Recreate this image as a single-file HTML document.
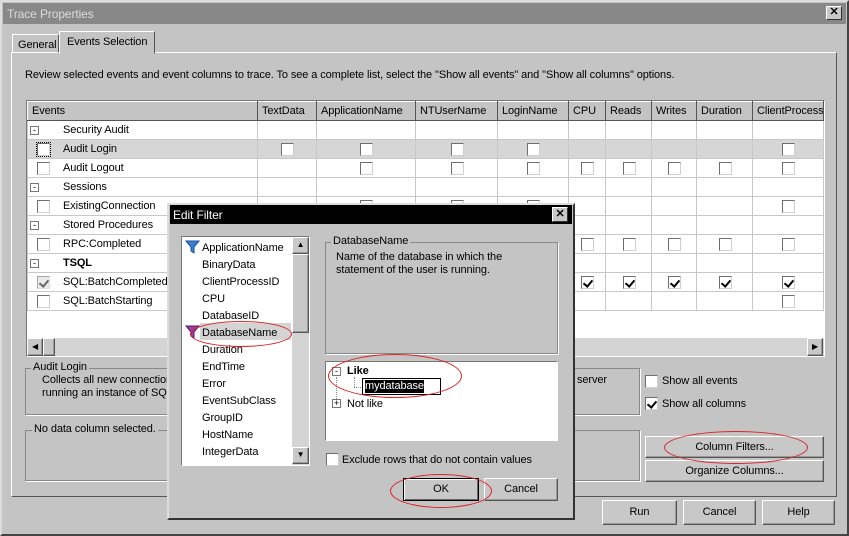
<!DOCTYPE html>
<html><head><meta charset="utf-8"><style>
*{box-sizing:border-box;margin:0;padding:0}
body{width:849px;height:536px;background:#c4c4c4;font-family:"Liberation Sans",sans-serif;font-size:11px;color:#000;position:relative;overflow:hidden;white-space:nowrap;letter-spacing:-0.1px}
.a{position:absolute}
.cb{position:absolute;width:13px;height:13px;background:#fff;border:1px solid #6e6e6e;border-right-color:#d0d0d0;border-bottom-color:#d0d0d0}
.ck::after{content:"";position:absolute;left:3px;top:1px;width:4px;height:7px;border:solid #000;border-width:0 2px 2px 0;transform:rotate(40deg)}
.btn{position:absolute;background:#c8c8c8;border:1px solid;border-color:#fff #555 #555 #fff;box-shadow:inset -1px -1px 0 #999;text-align:center;font-size:11px}
.grp{position:absolute;border:1px solid #888;box-shadow:1px 1px 0 #fff}
.lbl{position:absolute;background:#c4c4c4;padding:0 2px;font-size:11px}
table{border-collapse:collapse;table-layout:fixed}
td{border:1px solid #c8c8c8;height:19px;padding:0;position:relative;font-size:11px;overflow:hidden}
th{height:19px;font-weight:normal;text-align:left;padding-left:4px;background:#c4c4c4;border:1px solid;border-color:#fff #555 #555 #fff;font-size:11px;overflow:hidden}
.tc .cb{left:50%;margin-left:-6px;top:3px}
.ell{position:absolute;border:1px solid #d22;border-radius:50%}
.li{position:absolute;left:202px;font-size:11px}
.pm{position:absolute;left:2px;top:5px;width:9px;height:9px;border:1px solid #777;font-size:9px;line-height:6px;text-align:center}
</style></head><body>
<div class="a" style="left:0;top:0;width:849px;height:536px;border:2px solid;border-color:#ddd #444 #444 #ddd"></div>
<div class="a" style="left:3px;top:3px;width:843px;height:21px;background:#888"></div>
<div class="a" style="left:7px;top:7px;color:#ddd;font-size:12px">Trace Properties</div>
<div class="a" style="left:826px;top:6px;width:16px;height:14px;background:#c8c8c8;border:1px solid;border-color:#fff #333 #333 #fff;font-weight:bold;font-size:11px;line-height:11px;text-align:center">✕</div>

<div class="a" style="left:11px;top:52px;width:826px;height:445px;border:1px solid;border-color:#fff #555 #555 #fff"></div>
<div class="a" style="left:12px;top:34px;width:47px;height:19px;border:1px solid;border-color:#fff #555 transparent #fff;padding:4px 0 0 5px">General</div>
<div class="a" style="left:59px;top:31px;width:96px;height:23px;border:1px solid;border-color:#fff #555 transparent #fff;background:#c4c4c4;padding:4px 0 0 7px">Events Selection</div>
<div class="a" style="left:25px;top:69px">Review selected events and event columns to trace. To see a complete list, select the "Show all events" and "Show all columns" options.</div>

<div class="a" style="left:26px;top:100px;width:799px;height:257px;background:#fff;border:1px solid;border-color:#777 #fff #fff #777"></div>
<table class="a" style="left:27px;top:101px;width:796px">
<colgroup><col style="width:230px"><col style="width:59px"><col style="width:99px"><col style="width:82px"><col style="width:71px"><col style="width:37px"><col style="width:46px"><col style="width:45px"><col style="width:56px"><col style="width:71px"></colgroup>
<tr><th>Events</th><th>TextData</th><th>ApplicationName</th><th>NTUserName</th><th>LoginName</th><th>CPU</th><th>Reads</th><th>Writes</th><th>Duration</th><th>ClientProcess</th></tr>
<tr class="tc"><td><span class="pm">-</span><span class="a" style="left:35px;top:3px">Security Audit</span></td><td></td><td></td><td></td><td></td><td></td><td></td><td></td><td></td><td></td></tr>
<tr class="tc" style="background:#d6d6d6"><td><span class="cb" style="left:15px;top:3px;outline:1px dotted #000"></span><span class="a" style="left:35px;top:3px">Audit Login</span></td><td><span class="cb"></span></td><td><span class="cb"></span></td><td><span class="cb"></span></td><td><span class="cb"></span></td><td></td><td></td><td></td><td></td><td><span class="cb"></span></td></tr>
<tr class="tc"><td><span class="cb" style="left:15px;top:3px"></span><span class="a" style="left:35px;top:3px">Audit Logout</span></td><td></td><td><span class="cb"></span></td><td><span class="cb"></span></td><td><span class="cb"></span></td><td><span class="cb"></span></td><td><span class="cb"></span></td><td><span class="cb"></span></td><td><span class="cb"></span></td><td><span class="cb"></span></td></tr>
<tr class="tc"><td><span class="pm">-</span><span class="a" style="left:35px;top:3px">Sessions</span></td><td></td><td></td><td></td><td></td><td></td><td></td><td></td><td></td><td></td></tr>
<tr class="tc"><td><span class="cb" style="left:15px;top:3px"></span><span class="a" style="left:35px;top:3px">ExistingConnection</span></td><td></td><td><span class="cb"></span></td><td><span class="cb"></span></td><td><span class="cb"></span></td><td></td><td></td><td></td><td></td><td><span class="cb"></span></td></tr>
<tr class="tc"><td><span class="pm">-</span><span class="a" style="left:35px;top:3px">Stored Procedures</span></td><td></td><td></td><td></td><td></td><td></td><td></td><td></td><td></td><td></td></tr>
<tr class="tc"><td><span class="cb" style="left:15px;top:3px"></span><span class="a" style="left:35px;top:3px">RPC:Completed</span></td><td></td><td></td><td></td><td></td><td><span class="cb"></span></td><td><span class="cb"></span></td><td><span class="cb"></span></td><td><span class="cb"></span></td><td><span class="cb"></span></td></tr>
<tr class="tc"><td><span class="pm">-</span><span class="a" style="left:35px;top:3px;font-weight:bold">TSQL</span></td><td></td><td></td><td></td><td></td><td></td><td></td><td></td><td></td><td></td></tr>
<tr class="tc"><td><span class="cb ck" style="left:15px;top:3px;background:#ddd;opacity:.6"></span><span class="a" style="left:35px;top:3px">SQL:BatchCompleted</span></td><td></td><td></td><td></td><td></td><td><span class="cb ck"></span></td><td><span class="cb ck"></span></td><td><span class="cb ck"></span></td><td><span class="cb ck"></span></td><td><span class="cb ck"></span></td></tr>
<tr class="tc"><td><span class="cb" style="left:15px;top:3px"></span><span class="a" style="left:35px;top:3px">SQL:BatchStarting</span></td><td></td><td></td><td></td><td></td><td></td><td></td><td></td><td></td><td><span class="cb"></span></td></tr>
</table>
<div class="a" style="left:27px;top:338px;width:797px;height:18px;background:#d4d4d4"></div>
<div class="btn" style="left:27px;top:338px;width:16px;height:18px;font-size:8px;line-height:15px">◀</div>
<div class="btn" style="left:43px;top:338px;width:12px;height:18px"></div>
<div class="btn" style="left:807px;top:338px;width:16px;height:18px;font-size:8px;line-height:15px">▶</div>

<div class="grp" style="left:25px;top:368px;width:615px;height:47px"></div>
<div class="lbl" style="left:31px;top:361px">Audit Login</div>
<div class="a" style="left:42px;top:374px;line-height:13px">Collects all new connection<br>running an instance of SQ</div>
<div class="a" style="left:568px;top:374px">a server</div>
<div class="grp" style="left:25px;top:430px;width:615px;height:51px"></div>
<div class="lbl" style="left:32px;top:423px">No data column selected.</div>

<div class="cb" style="left:645px;top:375px"></div><div class="a" style="left:662px;top:375px">Show all events</div>
<div class="cb ck" style="left:645px;top:397px"></div><div class="a" style="left:662px;top:398px">Show all columns</div>
<div class="btn" style="left:645px;top:436px;width:179px;height:22px;line-height:20px">Column Filters...</div>
<div class="btn" style="left:645px;top:460px;width:179px;height:22px;line-height:20px">Organize Columns...</div>
<div class="ell" style="left:664px;top:431px;width:144px;height:33px"></div>

<div class="btn" style="left:602px;top:500px;width:75px;height:25px;line-height:23px">Run</div>
<div class="btn" style="left:683px;top:500px;width:73px;height:25px;line-height:23px">Cancel</div>
<div class="btn" style="left:762px;top:500px;width:73px;height:25px;line-height:23px">Help</div>

<!-- Edit Filter dialog -->
<div class="a" style="left:167px;top:203px;width:408px;height:317px;background:#c4c4c4;border:2px solid;border-color:#ddd #333 #333 #ddd"></div>
<div class="a" style="left:170px;top:205px;width:402px;height:19px;background:#000"></div>
<div class="a" style="left:173px;top:208px;color:#fff;font-size:12px">Edit Filter</div>
<div class="a" style="left:552px;top:207px;width:16px;height:15px;background:#c8c8c8;border:1px solid;border-color:#fff #333 #333 #fff;font-weight:bold;font-size:11px;line-height:12px;text-align:center">✕</div>

<div class="a" style="left:181px;top:236px;width:129px;height:230px;background:#fff;border:1px solid;border-color:#777 #fff #fff #777"></div>
<div class="a" style="left:292px;top:237px;width:17px;height:228px;background:#d4d4d4"></div>
<div class="btn" style="left:292px;top:237px;width:17px;height:17px;font-size:8px;line-height:14px">▲</div>
<div class="btn" style="left:292px;top:254px;width:17px;height:79px"></div>
<div class="btn" style="left:292px;top:447px;width:17px;height:17px;font-size:8px;line-height:14px">▼</div>
<div class="a" style="left:200px;top:323px;width:91px;height:17px;background:#d4d4d4"></div>
<svg class="a" style="left:185px;top:240px" width="16" height="14"><path d="M1 1H14L9 7V13L6 11V7Z" fill="#3a7fd0" stroke="#1a4f9a"/></svg>
<svg class="a" style="left:185px;top:325px" width="16" height="14"><path d="M1 1H14L9 7V13L6 11V7Z" fill="#9b3fa0" stroke="#5a1a6a"/></svg>
<div class="li" style="top:242px">ApplicationName</div>
<div class="li" style="top:259px">BinaryData</div>
<div class="li" style="top:276px">ClientProcessID</div>
<div class="li" style="top:293px">CPU</div>
<div class="li" style="top:310px">DatabaseID</div>
<div class="li" style="top:327px">DatabaseName</div>
<div class="li" style="top:344px">Duration</div>
<div class="li" style="top:361px">EndTime</div>
<div class="li" style="top:378px">Error</div>
<div class="li" style="top:395px">EventSubClass</div>
<div class="li" style="top:412px">GroupID</div>
<div class="li" style="top:429px">HostName</div>
<div class="li" style="top:446px">IntegerData</div>
<div class="ell" style="left:190px;top:321px;width:102px;height:26px"></div>

<div class="grp" style="left:325px;top:242px;width:233px;height:112px"></div>
<div class="lbl" style="left:331px;top:235px">DatabaseName</div>
<div class="a" style="left:336px;top:251px;line-height:13px">Name of the database in which the<br>statement of the user is running.</div>

<div class="a" style="left:325px;top:361px;width:233px;height:80px;background:#fff;border:1px solid;border-color:#777 #fff #fff #777"></div>
<div class="a" style="left:332px;top:367px;width:9px;height:9px;border:1px solid #777;font-size:9px;line-height:6px;text-align:center;background:#fff">-</div>
<div class="a" style="left:336px;top:377px;height:24px;border-left:1px dotted #888"></div>
<div class="a" style="left:354px;top:377px;height:10px;border-left:1px dotted #888"></div>
<div class="a" style="left:354px;top:387px;width:9px;border-top:1px dotted #888"></div>
<div class="a" style="left:347px;top:365px;font-weight:bold">Like</div>
<div class="a" style="left:362px;top:378px;width:79px;height:17px;border:1px solid #000;background:#fff"></div>
<div class="a" style="left:365px;top:380px;background:#000;color:#fff;line-height:13px">mydatabase</div>
<div class="a" style="left:332px;top:399px;width:9px;height:9px;border:1px solid #777;font-size:9px;line-height:7px;text-align:center;background:#fff">+</div>
<div class="a" style="left:347px;top:398px">Not like</div>
<div class="ell" style="left:328px;top:354px;width:134px;height:44px"></div>

<div class="cb" style="left:326px;top:453px"></div>
<div class="a" style="left:342px;top:454px">Exclude rows that do not contain values</div>

<div class="btn" style="left:403px;top:478px;width:76px;height:23px;line-height:20px;border:1px solid #000;box-shadow:inset 1px 1px 0 #fff,inset -1px -1px 0 #666">OK</div>
<div class="btn" style="left:484px;top:478px;width:74px;height:23px;line-height:21px">Cancel</div>
<div class="ell" style="left:390px;top:474px;width:102px;height:34px"></div>
</body></html>
